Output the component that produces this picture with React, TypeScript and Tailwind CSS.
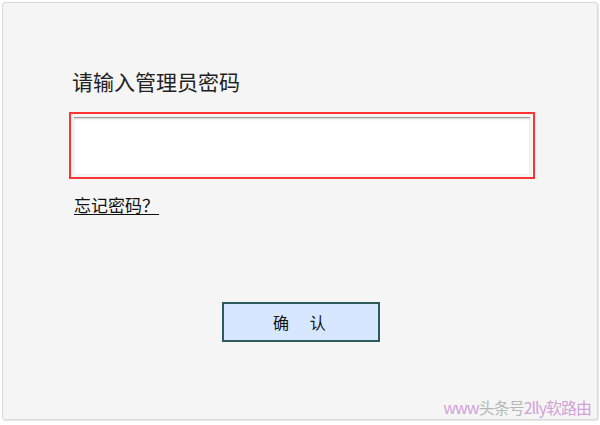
import React from 'react';

const font = { fontFamily: '"Noto Sans CJK SC", "Liberation Sans", sans-serif' };

export default function App() {
  return (
    <div className="w-[600px] h-[425px] bg-white p-[2px]" style={font}>
      <div className="relative w-[596px] h-[418px] bg-[#f5f5f5] border border-[#d9d9d9] rounded-[3px] shadow-[1px_1px_1px_#e6e6e6]">
        <div className="flex flex-col pl-[66px] pt-[65px]">
          <div className="text-[21px] leading-[26px] text-[#222] pl-[3px]">请输入管理员密码</div>
          <div className="mt-[18px] w-[466px] h-[67px] border-2 border-[#ff3333] p-[3px] flex">
            <input
              type="password"
              className="flex-1 min-w-0 h-full bg-white outline-none border-t border-[#a0a0a0] shadow-[inset_0_1px_2px_#d0d0d0,0_0_1px_#e0e0e0]"
            />
          </div>
          <div className="mt-[14px] pl-[5px]">
            <a className="text-[17px] leading-[22px] text-[#111] underline underline-offset-2 cursor-pointer">
              忘记密码？
            </a>
          </div>
          <div className="mt-[85px] ml-[153px]">
            <button className="w-[158px] h-[40px] bg-[#d7e7ff] border-2 border-[#2f5a5a] text-[16px] text-[#111] tracking-[1.3em] pl-[1.1em]">
              确认
            </button>
          </div>
        </div>
        <div className="absolute right-[6px] bottom-[1px] text-[16px] leading-[22px] tracking-[-1px] text-[#c88ad3]/80">
          www<span className="text-[#9a9a9a]/70">头条号</span>2lly软路由
        </div>
      </div>
    </div>
  );
}
